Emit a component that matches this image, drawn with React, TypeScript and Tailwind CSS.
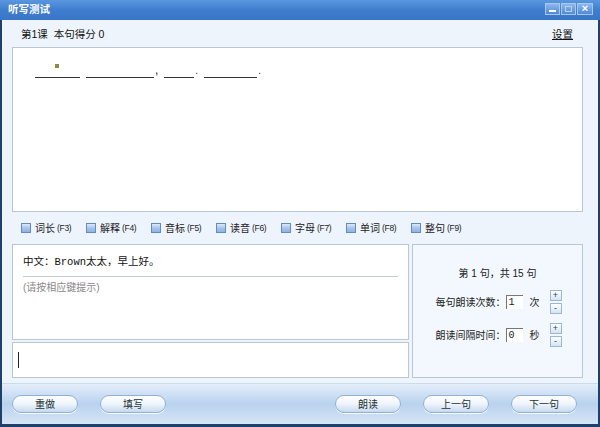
import React from "react";

const font = { fontFamily: '"Liberation Sans", "Noto Sans CJK SC", sans-serif' };
const mono = { fontFamily: '"Liberation Mono", "Noto Sans CJK SC", monospace' };

function Check({ name, key_ }: { name: string; key_: string }) {
  return (
    <label className="w-[65px] flex items-center gap-[2px] text-[10px] text-[#222]">
      <span className="w-[10px] h-[10px] mr-[2px] border border-[#5f8bc6] bg-gradient-to-b from-[#dce9f8] via-[#a8c5ea] to-[#8fb3e2]" />
      <span>{name}</span>
      <span className="text-[8.5px] tracking-[-0.3px]">({key_})</span>
    </label>
  );
}

function Btn({ label }: { label: string }) {
  return (
    <button className="w-[66px] h-[18px] rounded-full border border-[#8fb1d8] bg-gradient-to-b from-white via-[#eef4fb] to-[#c6daf0] text-[10px] text-[#233] shadow-[0_1px_0_#ffffff]">
      {label}
    </button>
  );
}

function PlusMinus() {
  return (
    <div className="flex flex-col gap-[2px]">
      <span className="w-[12px] h-[11px] border border-[#9bb6d6] bg-gradient-to-b from-white to-[#d4e3f4] text-[9px] leading-[9px] text-center text-[#345]">+</span>
      <span className="w-[12px] h-[11px] border border-[#9bb6d6] bg-gradient-to-b from-white to-[#d4e3f4] text-[9px] leading-[9px] text-center text-[#345]">-</span>
    </div>
  );
}

function Row({ label, value, unit }: { label: string; value: string; unit: string }) {
  return (
    <div className="flex items-center">
      <span>{label}</span>
      <span className="w-[17px] h-[14px] bg-white border-t border-l border-[#777] text-[10px] pl-[2px] leading-[13px]" style={mono}>{value}</span>
      <span className="ml-[7px]">{unit}</span>
      <span className="ml-[10px]"><PlusMinus /></span>
    </div>
  );
}

export default function App() {
  const checks: [string, string][] = [
    ["词长", "F3"],
    ["解释", "F4"],
    ["音标", "F5"],
    ["读音", "F6"],
    ["字母", "F7"],
    ["单词", "F8"],
    ["整句", "F9"],
  ];
  return (
    <div style={font} className="w-[600px] h-[427px] flex flex-col bg-[#1f3f6c] overflow-hidden">
      {/* title bar */}
      <div className="h-[20px] flex items-center justify-between pl-[8px] pr-[7px] bg-gradient-to-b from-[#5b97df] via-[#3f7dcf] to-[#3a76c8]">
        <span className="text-white text-[10.5px] font-bold">听写测试</span>
        <div className="flex items-center gap-[1px] mt-[-3px]">
          <span className="w-[15px] h-[12px] bg-gradient-to-b from-[#8cb9ee] to-[#5088d2] border border-[#a6c8ef] flex items-end justify-center pb-[2px]"><span className="w-[7px] h-[2px] bg-white" /></span>
          <span className="w-[15px] h-[12px] bg-gradient-to-b from-[#8cb9ee] to-[#5088d2] border border-[#a6c8ef] flex items-center justify-center"><span className="w-[7px] h-[6px] border border-[#b8d3f2]" /></span>
          <span className="w-[16px] h-[12px] bg-gradient-to-b from-[#8cb9ee] to-[#5088d2] border border-[#a6c8ef] flex items-center justify-center text-white text-[11px] font-bold leading-none">×</span>
        </div>
      </div>

      {/* body */}
      <div className="flex-1 flex flex-col mx-[2px] bg-[#eef4fc]">
        <div className="h-[27px] flex items-center justify-between pl-[19px] pr-[25px] pt-[3px] text-[10.5px] text-[#111]">
          <span>第1课&nbsp;&nbsp;本句得分 0</span>
          <span className="underline">设置</span>
        </div>

        <div className="ml-[10px] mr-[15px] h-[165px] bg-white border border-[#b9c6d3]">
          <div className="flex items-end pt-[15px] pl-[22px] text-[12px] text-[#222]">
            <span className="w-[45px] border-b border-[#333] h-[15px] relative">
              <span className="absolute left-[20px] top-[1px] w-[4px] h-[4px] bg-[#8b8b4a]" />
            </span>
            <span className="w-[68px] border-b border-[#333] h-[15px] ml-[6px]" />
            <span className="leading-[15px] ml-[1px]">,</span>
            <span className="w-[30px] border-b border-[#333] h-[15px] ml-[6px]" />
            <span className="leading-[15px] ml-[1px] text-[10px]">.</span>
            <span className="w-[53px] border-b border-[#333] h-[15px] ml-[6px]" />
            <span className="leading-[15px] ml-[1px] text-[10px]">.</span>
          </div>
        </div>

        <div className="h-[32px] flex items-center pl-[19px]">
          {checks.map(([n, k]) => (
            <Check key={n} name={n} key_={k} />
          ))}
        </div>

        <div className="flex gap-[3px] ml-[10px] mr-[15px] h-[134px]">
          <div className="w-[397px] flex flex-col gap-[2px]">
            <div className="flex-1 bg-white border border-[#b9c6d3] px-[10px] pt-[9px]">
              <div className="text-[10.5px] text-[#111] pb-[5px] border-b border-[#c4ccd6]">
                中文：<span style={mono}>Brown</span>太太，早上好。
              </div>
              <div className="text-[10px] text-[#888] pt-[3px]">(请按相应键提示)</div>
            </div>
            <div className="h-[36px] bg-white border border-[#b9c6d3] flex items-center pl-[5px]">
              <span className="w-[1px] h-[16px] bg-[#222]" />
            </div>
          </div>
          <div className="flex-1 bg-[#f3f8fe] border border-[#b9c6d3] flex flex-col items-center pt-[21px] text-[10px] text-[#222]">
            <div>第 1 句，共 15 句</div>
            <div className="mt-[9px] ml-[2px]">
              <Row label="每句朗读次数：" value="1" unit="次" />
            </div>
            <div className="mt-[9px] ml-[2px]">
              <Row label="朗读间隔时间：" value="0" unit="秒" />
            </div>
          </div>
        </div>

        {/* bottom bar */}
        <div className="mt-[5px] flex-1 flex items-center px-[10px] bg-gradient-to-b from-[#e4eefa] via-[#b9d2ee] to-[#d6e5f6] border-t border-[#cbdcef]">
          <div className="flex gap-[22px]">
            <Btn label="重做" />
            <Btn label="填写" />
          </div>
          <div className="ml-auto flex gap-[22px] pr-[11px]">
            <Btn label="朗读" />
            <Btn label="上一句" />
            <Btn label="下一句" />
          </div>
        </div>
      </div>
      <div className="h-[3px]" />
    </div>
  );
}
